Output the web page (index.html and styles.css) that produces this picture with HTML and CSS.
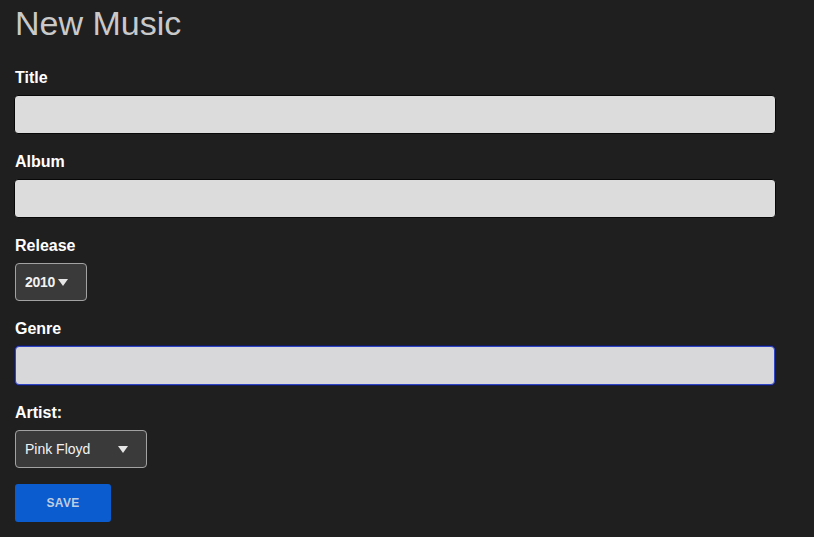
FILE: index.html
```html
<!DOCTYPE html>
<html lang="en">
<head>
<meta charset="utf-8">
<title>New Music</title>
<link rel="stylesheet" href="styles.css">
</head>
<body>
<main class="page">
  <h1 class="page-title">New Music</h1>
  <form class="music-form">
    <label class="field-label" for="title">Title</label>
    <input class="text-input" id="title" type="text">

    <label class="field-label" for="album">Album</label>
    <input class="text-input" id="album" type="text">

    <label class="field-label" for="release">Release</label>
    <div class="select-wrap select-year">
      <select class="select-box select-bold" id="release">
        <option>2010</option>
      </select>
      <span class="select-arrow"></span>
    </div>

    <label class="field-label" for="genre">Genre</label>
    <input class="text-input text-input-focused" id="genre" type="text">

    <label class="field-label" for="artist">Artist:</label>
    <div class="select-wrap select-artist">
      <select class="select-box" id="artist">
        <option>Pink Floyd</option>
      </select>
      <span class="select-arrow"></span>
    </div>

    <button class="save-button" type="button">SAVE</button>
  </form>
</main>
</body>
</html>
```

FILE: styles.css
```css
html, body {
  margin: 0;
  padding: 0;
  background: #1f1f1f;
}

body {
  font-family: "Liberation Sans", Arial, sans-serif;
  color: #ffffff;
}

.page {
  padding: 3px 14px 0;
}

.page-title {
  margin: 0 0 25px 1px;
  font-size: 34px;
  line-height: 40px;
  font-weight: normal;
  color: #c9c9c9;
}

.music-form {
  display: flex;
  flex-direction: column;
  align-items: flex-start;
}

.field-label {
  display: block;
  margin: 0 0 8px 1px;
  padding-top: 1px;
  font-size: 16px;
  line-height: 18px;
  font-weight: bold;
  color: #ffffff;
}

.text-input {
  box-sizing: border-box;
  width: 762px;
  height: 39px;
  margin: 0 0 18px;
  padding: 0 10px;
  background: #dcdcdc;
  border: 1px solid #080808;
  border-radius: 4px;
  font-family: inherit;
  font-size: 14px;
  outline: none;
}

.text-input-focused {
  width: 760px;
  margin-left: 1px;
  border: 1px solid #2f45c4;
  box-shadow: 0 0 0 1px #141a52;
  background: #d8d8da;
}

.select-wrap {
  position: relative;
  margin: 0 0 18px 1px;
}

.select-year {
  width: 72px;
}

.select-artist {
  width: 132px;
  margin-bottom: 15px;
}

.select-box {
  -webkit-appearance: none;
  appearance: none;
  box-sizing: border-box;
  width: 100%;
  height: 38px;
  margin: 0;
  padding: 0 0 0 9px;
  background: #3a3a3a;
  color: #f2f2f2;
  border: 1px solid #a2a2a2;
  border-radius: 4px;
  font-family: inherit;
  font-size: 14px;
  outline: none;
}

.select-bold {
  font-weight: bold;
  font-size: 14px;
  letter-spacing: -0.3px;
}

.select-arrow {
  position: absolute;
  right: 19px;
  top: 16px;
  width: 0;
  height: 0;
  border-left: 5.5px solid transparent;
  border-right: 5.5px solid transparent;
  border-top: 7px solid #e6e6e6;
  pointer-events: none;
}

.save-button {
  box-sizing: border-box;
  width: 96px;
  height: 38px;
  margin: 1px 0 0 1px;
  background: #0b5cce;
  color: #bfcde3;
  border: none;
  border-radius: 3px;
  font-family: inherit;
  font-size: 12px;
  font-weight: bold;
  letter-spacing: 0.3px;
  cursor: pointer;
}
```
